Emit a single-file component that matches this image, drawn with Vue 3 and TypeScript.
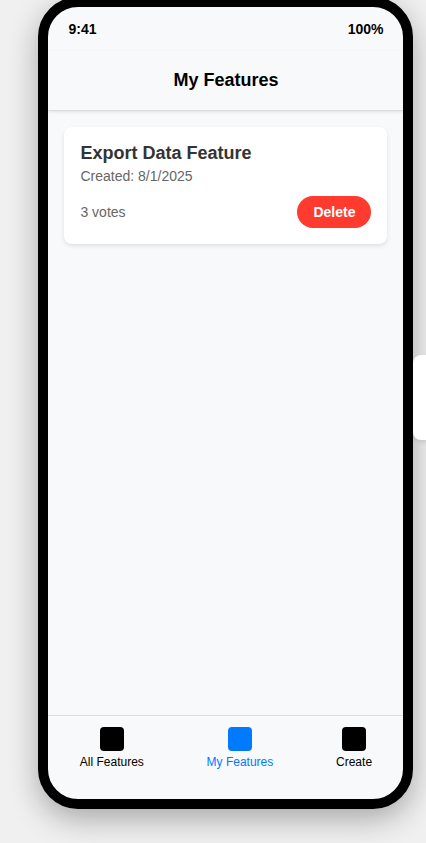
<script setup lang="ts">
import { ref } from 'vue'

interface Feature {
  id: number
  title: string
  created: string
  votes: number
}

const features = ref<Feature[]>([
  { id: 1, title: 'Export Data Feature', created: '8/1/2025', votes: 3 },
])
const tabs: string[] = ['All Features', 'My Features', 'Create']
const activeTab = ref('My Features')

function removeFeature(id: number): void {
  features.value = features.value.filter((f) => f.id !== id)
}
</script>

<template>
  <div class="stage">
    <div class="phone">
      <div class="status-bar">
        <span>9:41</span>
        <span>100%</span>
      </div>
      <header class="header">
        <h1>My Features</h1>
      </header>
      <main class="content">
        <article v-for="feature in features" :key="feature.id" class="card">
          <h2>{{ feature.title }}</h2>
          <p class="created">Created: {{ feature.created }}</p>
          <div class="card-footer">
            <span>{{ feature.votes }} votes</span>
            <button type="button" class="delete" @click="removeFeature(feature.id)">Delete</button>
          </div>
        </article>
      </main>
      <nav class="tab-bar">
        <div
          v-for="tab in tabs"
          :key="tab"
          class="tab"
          :class="{ active: tab === activeTab }"
          @click="activeTab = tab"
        >
          <div class="tab-icon"></div>
          <span>{{ tab }}</span>
        </div>
      </nav>
    </div>
    <aside class="side-panel"></aside>
  </div>
</template>

<style>
body {
  margin: 0;
  background: #f0f0f0;
  overflow: hidden;
}
</style>

<style scoped>
.stage {
  display: flex;
  align-items: center;
  height: 843px;
  padding-left: 38.45px;
  box-sizing: border-box;
  overflow: hidden;
  background: #f0f0f0;
  font-family: "Liberation Sans", Arial, sans-serif;
}

.phone {
  display: flex;
  flex-direction: column;
  flex: none;
  align-self: flex-start;
  box-sizing: border-box;
  width: 375px;
  height: 812px;
  margin-top: -3px;
  border: 10px solid #000;
  border-radius: 40px;
  background: #f8f9fb;
  box-shadow: 0 10px 30px rgba(0, 0, 0, 0.3);
  overflow: hidden;
}

.status-bar {
  display: flex;
  align-items: center;
  justify-content: space-between;
  flex: none;
  box-sizing: border-box;
  height: 44px;
  padding: 0 20px;
  font-size: 14px;
  font-weight: 600;
  color: #000;
}

.header {
  display: flex;
  align-items: center;
  justify-content: center;
  flex: none;
  box-sizing: border-box;
  height: 60px;
  padding-bottom: 1px;
  border-bottom: 1px solid #dcdddf;
  box-shadow: 0 1px 3px rgba(0, 0, 0, 0.1);
}

.header h1 {
  margin: 0;
  font-size: 18px;
  font-weight: 600;
  color: #000;
}

.content {
  flex: 1;
  padding: 16px;
}

.card {
  box-sizing: border-box;
  height: 117px;
  padding: 16px;
  border-radius: 8px;
  background: #fff;
  box-shadow: 0 2px 4px rgba(0, 0, 0, 0.1);
}

.card h2 {
  margin: 0 0 5px;
  font-size: 18px;
  line-height: 20px;
  font-weight: 600;
  color: #333;
}

.created {
  margin: 0 0 12px;
  font-size: 14px;
  line-height: 16px;
  color: #666;
}

.card-footer {
  display: flex;
  align-items: center;
  justify-content: space-between;
  font-size: 14px;
  color: #666;
}

.delete {
  height: 32px;
  padding: 0 16px;
  border: 0;
  border-radius: 16px;
  background: #ff3b30;
  font-family: inherit;
  font-size: 14px;
  font-weight: 600;
  color: #fff;
  cursor: pointer;
}

.tab-bar {
  display: flex;
  justify-content: space-around;
  flex: none;
  box-sizing: border-box;
  height: 84px;
  padding-top: 11px;
  border-top: 1px solid #dcdddf;
}

.tab {
  display: flex;
  flex-direction: column;
  align-items: center;
  gap: 4px;
  font-size: 12px;
  line-height: 14px;
  color: #000;
  cursor: pointer;
}

.tab-icon {
  width: 24px;
  height: 24px;
  border-radius: 4px;
  background: #000;
}

.tab.active {
  color: #007aff;
}

.tab.active .tab-icon {
  background: #007aff;
}

.side-panel {
  flex: none;
  align-self: flex-start;
  width: 200px;
  height: 85px;
  margin-top: 355px;
  border-radius: 8px;
  background: #fff;
  box-shadow: 0 2px 4px rgba(0, 0, 0, 0.1);
}
</style>
